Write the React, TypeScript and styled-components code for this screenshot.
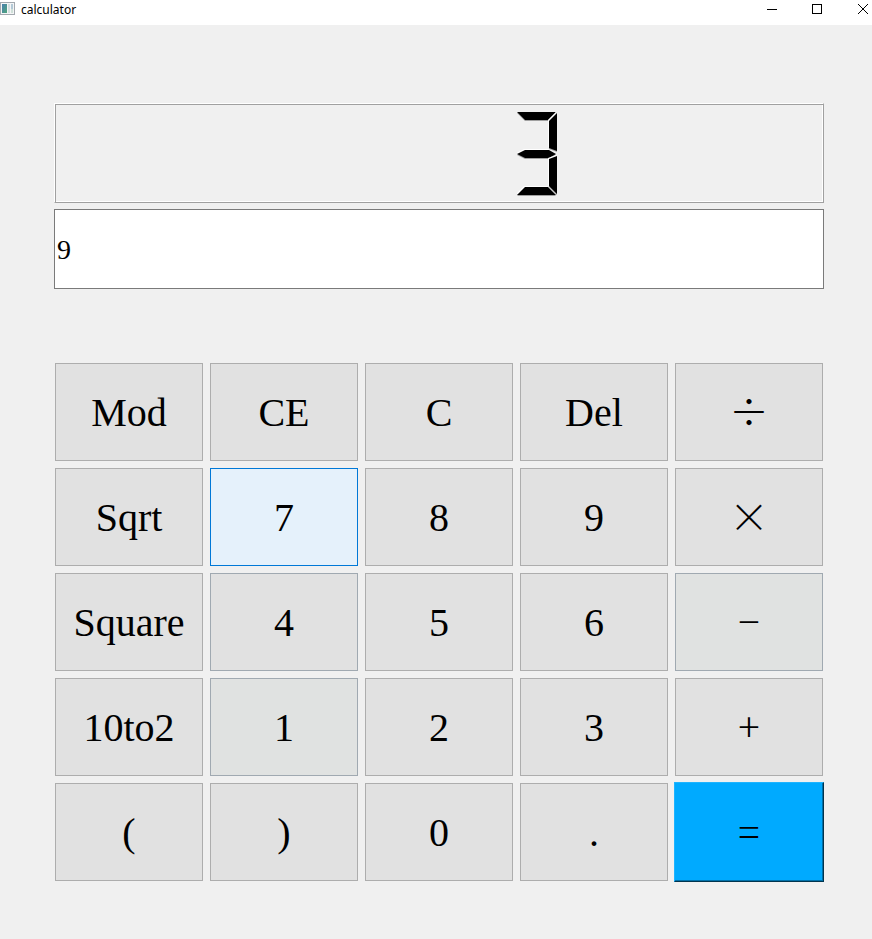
import React from "react";
import styled, { createGlobalStyle, css } from "styled-components";

const GlobalStyle = createGlobalStyle`
  *, *::before, *::after { box-sizing: border-box; }
  body { margin: 0; background: #f0f0f0; color: #000; }
`;

const Window = styled.div`
  display: flex;
  flex-direction: column;
  min-height: 100vh;
`;

const TitleBar = styled.header`
  display: flex;
  align-items: flex-start;
  height: 25px;
  background: #fff;
`;

const AppIcon = styled.svg`
  flex: none;
  margin-top: 2px;
`;

const Title = styled.h1`
  flex: 1;
  margin: 0 0 0 5px;
  font: 400 12px/20px "Noto Sans", "Open Sans", sans-serif;
`;

const WindowControls = styled.div`
  display: flex;
  gap: 25px;
`;

const WindowButton = styled.button`
  display: flex;
  align-items: center;
  justify-content: center;
  width: 20px;
  height: 18px;
  padding: 0;
  border: 0;
  background: none;
`;

const Panel = styled.main`
  display: flex;
  flex-direction: column;
  gap: 6px;
  padding: 78px 48px 57px 54px;
`;

const Lcd = styled.output`
  display: grid;
  grid-template-columns: repeat(5, 40px);
  justify-content: center;
  align-items: center;
  column-gap: 9px;
  height: 100px;
  padding-top: 2px;
  border: 1px solid;
  border-color: #fff #a0a0a0 #a0a0a0 #fff;
  box-shadow: inset 1px 1px #a0a0a0, inset -1px -1px #fff;
`;

const Digit = styled.svg`
  grid-column: 5;
`;

const Expression = styled.input`
  width: 100%;
  height: 80px;
  padding: 2px 2px 0;
  border: 1px solid #7a7a7a;
  border-radius: 0;
  outline: 0;
  background: #fff;
  color: #000;
  font: 400 28px "Liberation Serif", serif;
`;

const Keypad = styled.div`
  display: grid;
  grid-template-columns: repeat(5, minmax(0, 1fr));
  grid-auto-rows: 100px;
  gap: 5px;
  margin-top: 67px;
`;

type Tone = "normal" | "hover" | "fading" | "cooled" | "equals";

const tones = {
  normal: css``,
  hover: css`
    border-color: #0078d7;
    background: #e5f1fb;
  `,
  fading: css`
    border-color: #a0a9b1;
    background: #e0e2e1;
  `,
  cooled: css`
    border-color: #a0a9b1;
  `,
  equals: css`
    margin: 0;
    border-color: #1eb4ff #00344e #00344e #1eb4ff;
    background: #00aaff;
    box-shadow: inset -1px -1px #0071aa;
  `,
};

const Key = styled.button<{ $tone: Tone; $operator: boolean }>`
  margin: 1px;
  padding: 2px 0 0;
  border: 1px solid #adadad;
  border-radius: 0;
  background: #e1e1e1;
  color: #000;
  font: 400 40px/44px "Liberation Serif", serif;
  ${(p) =>
    p.$operator &&
    css`
      padding: 0 0 4px;
      font-family: "Noto Sans CJK SC", sans-serif;
      font-weight: 300;
    `}
  ${(p) => tones[p.$tone]}
`;

interface KeyDef {
  label: string;
  tone?: Tone;
  operator?: boolean;
}

const keys: KeyDef[] = [
  { label: "Mod" },
  { label: "CE" },
  { label: "C" },
  { label: "Del" },
  { label: "÷", operator: true },
  { label: "Sqrt" },
  { label: "7", tone: "hover" },
  { label: "8" },
  { label: "9" },
  { label: "×", operator: true },
  { label: "Square" },
  { label: "4", tone: "cooled" },
  { label: "5" },
  { label: "6" },
  { label: "−", tone: "fading", operator: true },
  { label: "10to2" },
  { label: "1", tone: "fading" },
  { label: "2" },
  { label: "3" },
  { label: "+", operator: true },
  { label: "(" },
  { label: ")" },
  { label: "0" },
  { label: "." },
  { label: "=", tone: "equals", operator: true },
];

const segments = [
  "0,0 39,0 31,8 8,8",
  "40,1 40,39 32,36 32,9",
  "0,42 8,38 32,38 39,42 32,46 8,46",
  "40,44 40,82 32,74 32,47",
  "0,83 8,75 31,75 39,83",
];

function LcdThree() {
  return (
    <Digit width="40" height="84" viewBox="0 0 40 84" role="img" aria-label="3">
      {segments.map((points) => (
        <g key={points}>
          <polygon points={points} fill="#fff" transform="translate(-1 -1)" />
          <polygon points={points} fill="#a0a0a0" transform="translate(0 1)" />
          <polygon points={points} fill="#000" />
        </g>
      ))}
    </Digit>
  );
}

export default function App() {
  return (
    <>
      <GlobalStyle />
      <Window>
        <TitleBar>
          <AppIcon width="16" height="14" viewBox="0 0 16 14" aria-hidden="true">
            <defs>
              <linearGradient id="pane" x1="0" y1="0" x2="1" y2="1">
                <stop offset="0" stopColor="#4a7fae" />
                <stop offset="1" stopColor="#4fa67c" />
              </linearGradient>
            </defs>
            <rect x="0.5" y="0.5" width="14" height="12" fill="#f4f5f6" stroke="#a3a9af" />
            <rect x="2" y="2" width="5" height="9" fill="url(#pane)" />
            <rect x="8" y="2" width="2" height="9" fill="#d3dfe0" />
            <rect x="11" y="2" width="2" height="5" fill="#b3c9d6" />
            <rect x="11" y="7" width="2" height="4" fill="#cfe0d8" />
          </AppIcon>
          <Title>calculator</Title>
          <WindowControls>
            <WindowButton type="button" aria-label="Minimize">
              <svg width="10" height="10" viewBox="0 0 10 10">
                <path d="M0 5.5H10" stroke="#000" />
              </svg>
            </WindowButton>
            <WindowButton type="button" aria-label="Maximize">
              <svg width="10" height="10" viewBox="0 0 10 10">
                <rect x="0.5" y="0.5" width="9" height="9" fill="none" stroke="#000" />
              </svg>
            </WindowButton>
            <WindowButton type="button" aria-label="Close">
              <svg width="12" height="10" viewBox="0 0 12 10">
                <path d="M2 0L12 10M12 0L2 10" stroke="#000" />
              </svg>
            </WindowButton>
          </WindowControls>
        </TitleBar>
        <Panel>
          <Lcd>
            <LcdThree />
          </Lcd>
          <Expression type="text" aria-label="Expression" defaultValue="9" />
          <Keypad>
            {keys.map(({ label, tone = "normal", operator = false }) => (
              <Key key={label} type="button" $tone={tone} $operator={operator}>
                {label}
              </Key>
            ))}
          </Keypad>
        </Panel>
      </Window>
    </>
  );
}
